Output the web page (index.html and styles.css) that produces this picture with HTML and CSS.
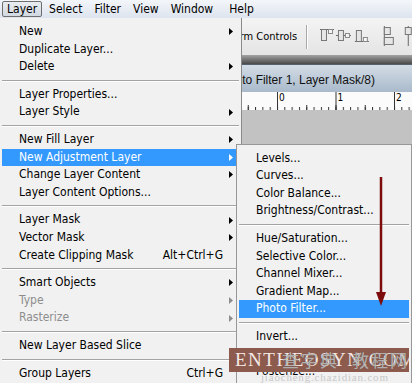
FILE: index.html
```html
<!DOCTYPE html>
<html>
<head>
    <title>Layer menu</title>
    <link rel="stylesheet" href="styles.css">
</head>
<body>
    <div class="menubar">
        <span class="mb-item active">Layer</span>
        <span class="mb-item">Select</span>
        <span class="mb-item">Filter</span>
        <span class="mb-item">View</span>
        <span class="mb-item mb-window">Window</span>
        <span class="mb-item">Help</span>
    </div>

    <div class="workspace">
        <div class="options">
            <span class="opt-label">Show Transform Controls</span>
            <span class="opt-divider"></span>
            <svg class="align-icons" width="92" height="22" viewBox="0 0 92 22">
                <!-- top edges -->
                <line x1="0" y1="3.5" x2="14" y2="3.5" stroke="#666"/>
                <rect x="1.5" y="3.5" width="5" height="11" fill="#e6e6e6" stroke="#777"/>
                <rect x="8.5" y="3.5" width="4" height="4" fill="#f6f6f6" stroke="#888"/>
                <!-- vertical centers -->
                <line x1="16" y1="9.5" x2="31" y2="9.5" stroke="#666"/>
                <rect x="18.5" y="4.5" width="5" height="10" fill="#e6e6e6" stroke="#777"/>
                <rect x="25.5" y="7.5" width="4" height="4" fill="#f6f6f6" stroke="#888"/>
                <!-- bottom edges -->
                <line x1="35" y1="15.5" x2="49" y2="15.5" stroke="#666"/>
                <rect x="36.5" y="4.5" width="5" height="11" fill="#e6e6e6" stroke="#777"/>
                <rect x="43.5" y="11.5" width="4" height="4" fill="#f6f6f6" stroke="#888"/>
                <!-- left edges -->
                <line x1="64.5" y1="0" x2="64.5" y2="20" stroke="#666"/>
                <rect x="64.5" y="1.5" width="6" height="7" fill="#e6e6e6" stroke="#777"/>
                <rect x="64.5" y="11.5" width="9" height="7" fill="#e6e6e6" stroke="#777"/>
                <!-- horizontal centers -->
                <line x1="88.5" y1="0" x2="88.5" y2="20" stroke="#666"/>
                <rect x="85.5" y="1.5" width="6" height="7" fill="#e6e6e6" stroke="#777"/>
            </svg>
        </div>
        <div class="band"></div>
        <div class="doc-title">
            <span class="doc-name">Untitled-1 @ 100% (Photo Filter 1, Layer Mask/8)</span>
        </div>
        <svg class="ruler" width="412" height="18" viewBox="0 0 412 18">
            <defs>
                <pattern id="minor" x="277" y="0" width="7.3125" height="18" patternUnits="userSpaceOnUse">
                    <line x1="0.5" y1="15" x2="0.5" y2="18" stroke="#333"/>
                </pattern>
                <pattern id="half" x="277" y="0" width="29.25" height="18" patternUnits="userSpaceOnUse">
                    <line x1="0.5" y1="13" x2="0.5" y2="18" stroke="#333"/>
                </pattern>
                <pattern id="major" x="277" y="0" width="58.5" height="18" patternUnits="userSpaceOnUse">
                    <line x1="0.5" y1="0" x2="0.5" y2="18" stroke="#333"/>
                </pattern>
            </defs>
            <rect width="412" height="18" fill="#fbfbfb"/>
            <rect width="412" height="18" fill="url(#minor)"/>
            <rect width="412" height="18" fill="url(#half)"/>
            <rect width="412" height="18" fill="url(#major)"/>
            <text x="279" y="9">0</text>
            <text x="337.5" y="9">1</text>
            <text x="396" y="9">2</text>
        </svg>
        <div class="canvas"></div>
    </div>

    <div class="menu main-menu">
        <div class="item"><span class="label">New</span><span class="arrow"><svg width="4" height="7"><polygon points="0,0 4,3.5 0,7"/></svg></span></div>
        <div class="item"><span class="label">Duplicate Layer...</span><span class="arrow"></span></div>
        <div class="item"><span class="label">Delete</span><span class="arrow"><svg width="4" height="7"><polygon points="0,0 4,3.5 0,7"/></svg></span></div>
        <div class="sep"></div>
        <div class="item"><span class="label">Layer Properties...</span><span class="arrow"></span></div>
        <div class="item"><span class="label">Layer Style</span><span class="arrow"><svg width="4" height="7"><polygon points="0,0 4,3.5 0,7"/></svg></span></div>
        <div class="sep"></div>
        <div class="item"><span class="label">New Fill Layer</span><span class="arrow"><svg width="4" height="7"><polygon points="0,0 4,3.5 0,7"/></svg></span></div>
        <div class="item hl"><span class="label">New Adjustment Layer</span><span class="arrow"><svg width="4" height="7"><polygon points="0,0 4,3.5 0,7"/></svg></span></div>
        <div class="item"><span class="label">Change Layer Content</span><span class="arrow"><svg width="4" height="7"><polygon points="0,0 4,3.5 0,7"/></svg></span></div>
        <div class="item"><span class="label">Layer Content Options...</span><span class="arrow"></span></div>
        <div class="sep"></div>
        <div class="item"><span class="label">Layer Mask</span><span class="arrow"><svg width="4" height="7"><polygon points="0,0 4,3.5 0,7"/></svg></span></div>
        <div class="item"><span class="label">Vector Mask</span><span class="arrow"><svg width="4" height="7"><polygon points="0,0 4,3.5 0,7"/></svg></span></div>
        <div class="item"><span class="label">Create Clipping Mask</span><span class="key">Alt+Ctrl+G</span><span class="arrow"></span></div>
        <div class="sep"></div>
        <div class="item"><span class="label">Smart Objects</span><span class="arrow"><svg width="4" height="7"><polygon points="0,0 4,3.5 0,7"/></svg></span></div>
        <div class="item dis"><span class="label">Type</span><span class="arrow"><svg width="4" height="7"><polygon points="0,0 4,3.5 0,7"/></svg></span></div>
        <div class="item dis"><span class="label">Rasterize</span><span class="arrow"><svg width="4" height="7"><polygon points="0,0 4,3.5 0,7"/></svg></span></div>
        <div class="sep"></div>
        <div class="item"><span class="label">New Layer Based Slice</span><span class="arrow"></span></div>
        <div class="sep"></div>
        <div class="item"><span class="label">Group Layers</span><span class="key">Ctrl+G</span><span class="arrow"></span></div>
    </div>

    <div class="menu sub-menu">
        <div class="item"><span class="label">Levels...</span></div>
        <div class="item"><span class="label">Curves...</span></div>
        <div class="item"><span class="label">Color Balance...</span></div>
        <div class="item"><span class="label">Brightness/Contrast...</span></div>
        <div class="sep"></div>
        <div class="item"><span class="label">Hue/Saturation...</span></div>
        <div class="item"><span class="label">Selective Color...</span></div>
        <div class="item"><span class="label">Channel Mixer...</span></div>
        <div class="item"><span class="label">Gradient Map...</span></div>
        <div class="item hl"><span class="label">Photo Filter...</span></div>
        <div class="sep"></div>
        <div class="item"><span class="label">Invert...</span></div>
        <div class="item"><span class="label">Threshold...</span></div>
        <div class="item"><span class="label">Posterize...</span></div>
    </div>

    <svg class="red-arrow" width="12" height="130" viewBox="0 0 12 130">
        <line x1="6" y1="0" x2="6" y2="118" stroke="#7d0c0c" stroke-width="2.5"/>
        <polygon points="1,115 11,115 6,129" fill="#7d0c0c"/>
    </svg>

    <div class="watermark">
        <span class="wm-latin">ENTHEOSYN.COM</span>
        <span class="wm-cn wm-cn1">查字典</span>
        <span class="wm-cn wm-cn2">教程网</span>
    </div>
    <div class="wm-url">jiaocheng.chazidian.com</div>
</body>
</html>
```

FILE: styles.css
```css
body {
    margin: 0;
    width: 412px;
    height: 383px;
    overflow: hidden;
    position: relative;
    font-family: "DejaVu Sans Condensed", "DejaVu Sans", sans-serif;
    font-stretch: condensed;
    font-size: 12px;
    color: #000;
    background: #c2c2c2;
}
.menubar {
    height: 18px;
    display: flex;
    align-items: center;
    gap: 2px;
    padding-left: 2px;
    background: linear-gradient(#f3f6fa, #dde4ee);
}
.mb-item {
    padding: 0 4px;
    line-height: 14px;
    border: 1px solid transparent;
    border-radius: 2px;
}
.mb-item.active {
    border-color: #6e6e6e;
    background: linear-gradient(#e9edf2, #d2d8e0);
}
.mb-window {
    margin-right: 4px;
}
.workspace {
    display: flex;
    flex-direction: column;
    height: 365px;
}
.options {
    height: 37px;
    display: flex;
    align-items: center;
    background: linear-gradient(#f4f4f4, #e4e4e4);
}
.opt-label {
    width: 298px;
    text-align: right;
    font-size: 11px;
    white-space: nowrap;
}
.opt-divider {
    width: 1px;
    height: 24px;
    margin-left: 9px;
    background: #a8a8a8;
    box-shadow: 1px 0 #fff;
}
.align-icons {
    margin-left: 13px;
}
.band {
    height: 9px;
    background: linear-gradient(#a2a2a2, #4a4a4a);
}
.doc-title {
    height: 28px;
    display: flex;
    align-items: center;
    padding-top: 2px;
    border-top: 1px solid #56606a;
    box-sizing: border-box;
    background: linear-gradient(#d3dce6, #a9bacb);
}
.doc-name {
    width: 375px;
    text-align: right;
    font-family: "Liberation Sans", sans-serif;
    font-size: 12px;
    color: #111;
    white-space: nowrap;
}
.ruler {
    display: block;
    font-family: "DejaVu Sans Condensed", "DejaVu Sans", sans-serif;
    font-size: 10px;
}
.canvas {
    flex: 1;
    background: #c2c2c2;
}

/* menus */
.menu {
    position: absolute;
    box-sizing: border-box;
    background: #f1f1f1;
}
.main-menu {
    left: 0;
    top: 18px;
    width: 242px;
    bottom: 0;
    padding-top: 5px;
    border-right: 1px solid #8a8a8a;
}
.sub-menu {
    left: 236px;
    top: 144px;
    width: 176px;
    bottom: 0;
    padding-top: 4.7px;
    border: 1px solid #979797;
    border-bottom: none;
}
.item {
    height: 17.6px;
    line-height: 17.6px;
    display: flex;
    align-items: center;
    margin: 0 2px;
    padding-left: 17px;
    white-space: nowrap;
}
.label {
    flex: 1;
}
.key {
    text-align: right;
}
.arrow {
    width: 16px;
    display: flex;
    align-items: center;
    padding-left: 6px;
    box-sizing: border-box;
}
.arrow svg {
    display: block;
    fill: currentColor;
}
.item.hl {
    background: #3399ff;
    color: #fff;
}
.item.dis {
    color: #8d8d8d;
}
.sep {
    height: 10px;
    box-sizing: border-box;
    padding-top: 4px;
    margin: 0 2px;
}
.sep::after {
    content: "";
    display: block;
    border-top: 1px solid #a3a3a3;
    border-bottom: 1px solid #fff;
}

/* annotations over the screenshot */
.red-arrow {
    position: absolute;
    left: 375px;
    top: 177px;
}
.watermark {
    position: absolute;
    left: 229px;
    top: 348px;
    width: 180px;
    height: 24px;
    background: #8d5b4d;
    overflow: hidden;
}
.wm-latin {
    position: absolute;
    left: 6px;
    top: 1px;
    font-family: "Liberation Serif", serif;
    font-size: 19px;
    letter-spacing: 1.5px;
    color: #f3e9e6;
    white-space: nowrap;
}
.wm-cn {
    position: absolute;
    top: 0;
    font-family: "Noto Sans CJK SC", sans-serif;
    font-size: 17px;
    line-height: 24px;
    letter-spacing: 2px;
    color: rgba(255, 255, 255, 0.55);
    text-shadow: 0 0 1px #555;
}
.wm-cn1 {
    left: 53px;
}
.wm-cn2 {
    left: 123px;
}
.wm-url {
    position: absolute;
    left: 261px;
    top: 371px;
    font-family: "Liberation Serif", serif;
    font-size: 11px;
    letter-spacing: 0.8px;
    color: rgba(170, 170, 170, 0.6);
}
```
